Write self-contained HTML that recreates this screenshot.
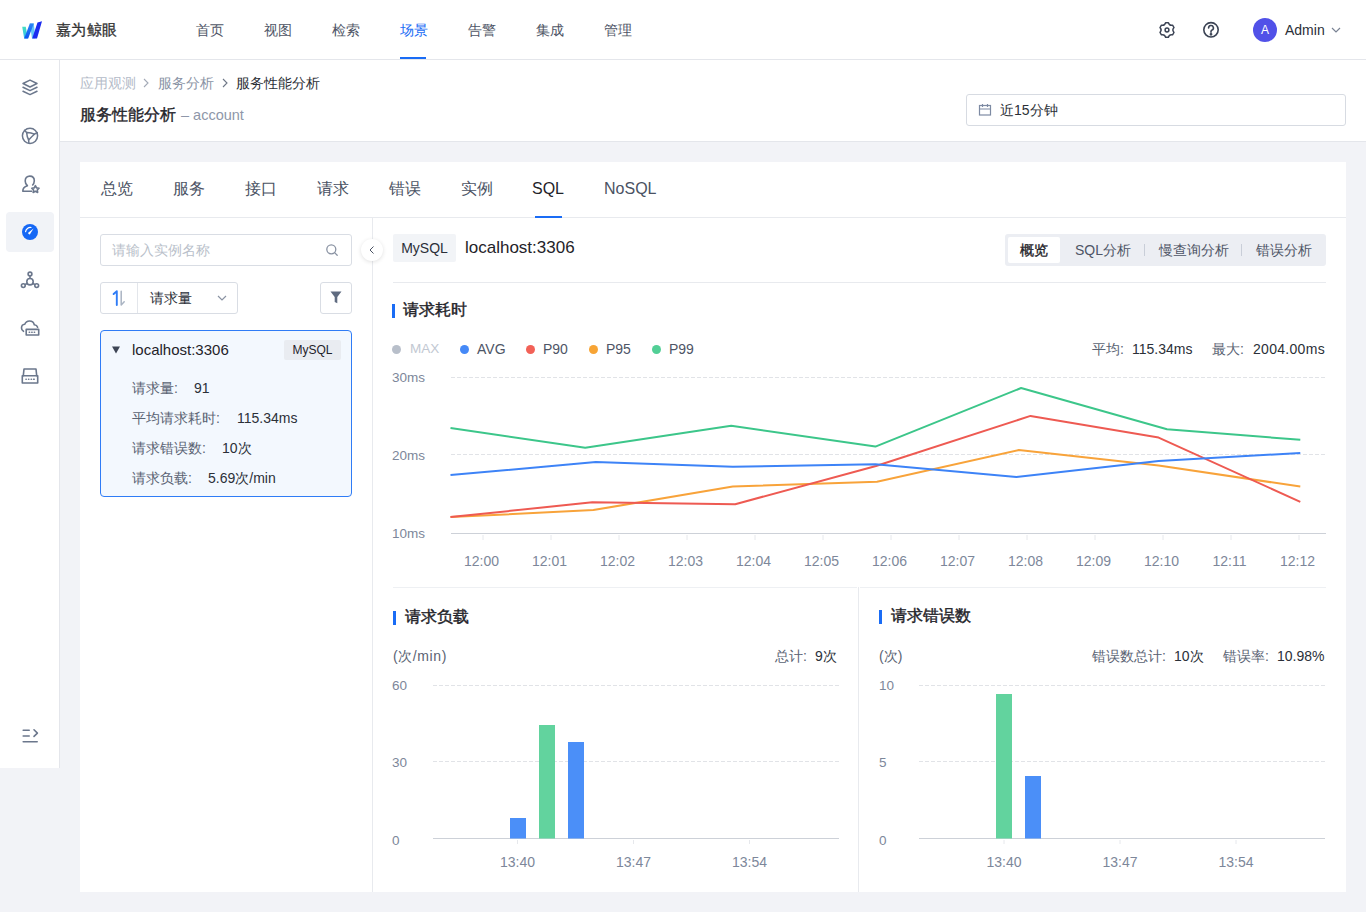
<!DOCTYPE html>
<html><head><meta charset="utf-8">
<style>
*{box-sizing:border-box;margin:0;padding:0}
html,body{width:1366px;height:912px;overflow:hidden;background:#f2f3f7;font-family:"Liberation Sans",sans-serif;color:#1f2329}
.a{position:absolute;white-space:nowrap}
#hdr{position:absolute;left:0;top:0;width:1366px;height:60px;background:#fff;border-bottom:1px solid #e4e6eb}
#side{position:absolute;left:0;top:60px;width:60px;height:708px;background:#fff;border-right:1px solid #e4e6eb}
#ttl{position:absolute;left:60px;top:60px;width:1306px;height:82px;background:#fff;border-bottom:1px solid #e4e6eb}
#card{position:absolute;left:80px;top:162px;width:1266px;height:730px;background:#fff}
.nav{font-size:14px;color:#4e5566;line-height:20px;top:20px}
.tab{font-size:16px;color:#4a5263;line-height:22px;top:178px}
.sicon{position:absolute;left:18px;width:24px;height:24px}
</style></head><body>
<div id="hdr"></div>
<div id="side"></div>
<div id="ttl"></div>
<div id="card"></div>
<!-- HEADER -->
<svg class="a" style="left:18px;top:18px" width="28" height="24" viewBox="0 0 28 24">
<defs><linearGradient id="g1" x1="0" y1="0" x2="0" y2="1"><stop offset="0" stop-color="#45e0c0"/><stop offset="1" stop-color="#2fb8f0"/></linearGradient>
<linearGradient id="g2" x1="0" y1="1" x2="0" y2="0"><stop offset="0" stop-color="#0d52f0"/><stop offset="1" stop-color="#2a86f6"/></linearGradient></defs>
<polygon points="4.2,8.7 7.8,8.7 9.8,20.5 6.2,20.5" fill="url(#g1)"/>
<polygon points="11.8,5.6 15.8,5.6 17.5,20.5 14,20.5" fill="#62c4fa"/>
<polygon points="6.2,20.5 10.2,20.5 15.8,5.6 11.8,5.6" fill="url(#g2)"/>
<polygon points="14.2,20.5 19,20.5 24,3.2 19.5,4.5" fill="#1c2cf0"/>
</svg>
<div class="a" style="left:56px;top:19px;font-size:15px;line-height:22px;color:#333;-webkit-text-stroke:0.3px #333;letter-spacing:0.3px">嘉为鲸眼</div>
<div class="a nav" style="left:196px">首页</div>
<div class="a nav" style="left:264px">视图</div>
<div class="a nav" style="left:332px">检索</div>
<div class="a nav" style="left:400px;color:#1a6cf5">场景</div>
<div class="a" style="left:400px;top:57px;width:26px;height:2px;background:#1a6cf5"></div>
<div class="a nav" style="left:468px">告警</div>
<div class="a nav" style="left:536px">集成</div>
<div class="a nav" style="left:604px">管理</div>
<!-- gear -->
<svg class="a" style="left:1155px;top:18px" width="24" height="24" viewBox="0 0 24 24" fill="none" stroke="#3b4354" stroke-width="1.5" stroke-linejoin="round">
<path transform="translate(12 12) scale(0.95) translate(-12 -12)" d="M10.51 4.34L13.49 4.34Q14.45 7.76 17.89 6.88L19.38 9.46Q16.90 12.00 19.38 14.54L17.89 17.12Q14.45 16.24 13.49 19.66L10.51 19.66Q9.55 16.24 6.11 17.12L4.62 14.54Q7.10 12.00 4.62 9.46L6.11 6.88Q9.55 7.76 10.51 4.34z"/>
<circle cx="12" cy="12" r="1.9"/>
</svg>
<!-- help -->
<svg class="a" style="left:1201px;top:20px" width="20" height="20" viewBox="0 0 20 20" fill="none" stroke="#3b4354" stroke-width="1.6">
<circle cx="10" cy="9.8" r="7.2"/>
<path d="M7.6 7.9a2.4 2.4 0 1 1 3.4 2.2c-.7.3-1 .8-1 1.5v.6" stroke-linecap="round"/>
<circle cx="10" cy="14.3" r=".6" fill="#3b4354"/>
</svg>
<div class="a" style="left:1253px;top:18px;width:24px;height:24px;border-radius:50%;background:#5151e8;color:#fff;font-size:12px;line-height:24px;text-align:center">A</div>
<div class="a" style="left:1285px;top:20px;font-size:14px;line-height:20px;color:#2b2f38">Admin</div>
<svg class="a" style="left:1331px;top:26px" width="10" height="8" viewBox="0 0 10 8" fill="none" stroke="#7a8394" stroke-width="1.2"><path d="M1 2l4 4 4-4"/></svg>
<!-- SIDEBAR -->
<svg class="sicon" style="top:75px" viewBox="0 0 24 24" fill="none" stroke="#6b778c" stroke-width="1.5" stroke-linejoin="round" stroke-linecap="round">
<path d="M12 5.1L19 8.5 12 12 5 8.5z"/><path d="M5 12.3L12 15.6l7-3.3"/><path d="M5 16.3L12 19.6l7-3.3"/>
</svg>
<svg class="sicon" style="top:124px" viewBox="0 0 24 24" fill="none" stroke="#6b778c" stroke-width="1.5" stroke-linejoin="round" stroke-linecap="round">
<circle cx="12" cy="11.8" r="7.6"/><path d="M8.6 8.4Q12.8 8.2 16.4 10.2Q13.6 12.6 10.6 16Q8.9 12.5 8.6 8.4z"/><path d="M8.6 8.4L6.5 6.2M16.4 10.2l2.8-1.6M10.6 16l.3 3.3"/>
</svg>
<svg class="sicon" style="top:172px" viewBox="0 0 24 24" fill="none" stroke="#6b778c" stroke-width="1.6" stroke-linejoin="round">
<path d="M14 19.2H4.8c0-3.3 2.3-4.8 4.6-5.5-1.3-1.1-2.2-2.5-2.2-4.8 0-3 1.8-4.8 4.6-4.8s4.5 1.8 4.5 4.7c0 2.1-.7 3.5-2 4.7"/>
<path d="M17.4 13.6l1.15 2.3 2.5.35-1.8 1.75.42 2.5-2.27-1.2-2.27 1.2.43-2.5-1.8-1.75 2.5-.35z"/>
</svg>
<div class="a" style="left:6px;top:212px;width:48px;height:40px;border-radius:4px;background:#f1f3f7"></div>
<svg class="sicon" style="top:220px" viewBox="0 0 24 24">
<circle cx="12" cy="12" r="8" fill="#1668f5"/>
<path d="M7.6 11.6a4.8 4.8 0 0 1 5.4-4.1" fill="none" stroke="#fff" stroke-width="1.2" stroke-linecap="round"/>
<path d="M15.6 8.6l-3.2 4.8a1.1 1.1 0 1 1-1.6-1.2z" fill="#fff"/>
</svg>
<svg class="sicon" style="top:268px" viewBox="0 0 24 24" fill="none" stroke="#6b778c" stroke-width="1.6">
<circle cx="12" cy="6" r="1.9"/><circle cx="12" cy="13.7" r="3.2"/><circle cx="5.3" cy="17.6" r="1.9"/><circle cx="18.7" cy="17.6" r="1.9"/>
<path d="M12 7.9v2.6M9.3 15.3l-2.4 1.4M14.7 15.3l2.4 1.4"/>
</svg>
<svg class="sicon" style="top:316px" viewBox="0 0 24 24" fill="none" stroke="#6b778c" stroke-width="1.6" stroke-linejoin="round" stroke-linecap="round">
<path d="M5.5 15.3C4.2 14.6 3.5 13.3 3.5 12c0-2 1.5-3.5 3.3-3.7C7.5 6.3 9.3 5 11.5 5c2.4 0 4.3 1.6 4.8 3.8 1.7.2 2.9 1 3.3 2.4"/>
<rect x="8.2" y="13.4" width="12.5" height="5.6"/><path d="M11.3 16.2h.3M13.8 16.2h.3M16.3 16.2h.3"/>
</svg>
<svg class="sicon" style="top:364px" viewBox="0 0 24 24" fill="none" stroke="#6b778c" stroke-width="1.6" stroke-linejoin="round" stroke-linecap="round">
<path d="M5.3 11.7L6 5h12l.7 6.7"/><rect x="4.3" y="11.7" width="15.4" height="7.3"/><path d="M8 15.3h.2M10.6 15.3h.2M13.2 15.3h.2M15.6 15.3h.6"/>
</svg>
<svg class="sicon" style="top:723px" viewBox="0 0 24 24" fill="none" stroke="#6b778c" stroke-width="1.6" stroke-linecap="round" stroke-linejoin="round">
<path d="M5.2 7.2h6M5.2 13h6M5.2 18.8h14"/><path d="M16 6.8l3.4 3.3-3.4 3.3"/>
</svg>
<!-- TITLE AREA -->
<div class="a" style="left:80px;top:73px;font-size:14px;line-height:20px;color:#b4bbc8">应用观测</div>
<svg class="a" style="left:142px;top:78px" width="8" height="10" viewBox="0 0 8 10" fill="none" stroke="#a3aab7" stroke-width="1.1"><path d="M2 1l4 4-4 4"/></svg>
<div class="a" style="left:158px;top:73px;font-size:14px;line-height:20px;color:#8a93a5">服务分析</div>
<svg class="a" style="left:221px;top:78px" width="8" height="10" viewBox="0 0 8 10" fill="none" stroke="#6e7787" stroke-width="1.1"><path d="M2 1l4 4-4 4"/></svg>
<div class="a" style="left:236px;top:73px;font-size:14px;line-height:20px;color:#2b2f36">服务性能分析</div>
<div class="a" style="left:80px;top:104px;font-size:16px;line-height:22px;color:#1f2329;-webkit-text-stroke:0.35px #1f2329">服务性能分析</div>
<div class="a" style="left:181px;top:105px;font-size:14.5px;line-height:20px;color:#8e97a9">– account</div>
<div class="a" style="left:966px;top:94px;width:380px;height:32px;border:1px solid #d7dbe2;border-radius:3px;background:#fff"></div>
<svg class="a" style="left:978px;top:103px" width="14" height="14" viewBox="0 0 14 14" fill="none" stroke="#7d8aa3" stroke-width="1.2"><rect x="1.5" y="2.5" width="11" height="9.5"/><path d="M1.5 6h11M4.5 1v3M9.5 1v3"/></svg>
<div class="a" style="left:1000px;top:100px;font-size:14px;line-height:20px;color:#2b2f36">近15分钟</div>
<!-- CARD TABS -->
<div class="a tab" style="left:101px">总览</div>
<div class="a tab" style="left:173px">服务</div>
<div class="a tab" style="left:245px">接口</div>
<div class="a tab" style="left:317px">请求</div>
<div class="a tab" style="left:389px">错误</div>
<div class="a tab" style="left:461px">实例</div>
<div class="a tab" style="left:532px;color:#1f2329">SQL</div>
<div class="a tab" style="left:604px">NoSQL</div>
<div class="a" style="left:80px;top:217px;width:1266px;height:1px;background:#e8eaee"></div>
<div class="a" style="left:535px;top:216px;width:27px;height:2px;background:#1a6cf5"></div>
<div class="a" style="left:372px;top:218px;width:1px;height:674px;background:#e8eaee"></div>
<!-- LEFT PANEL -->
<div class="a" style="left:100px;top:234px;width:252px;height:32px;border:1px solid #d9dde4;border-radius:3px;background:#fff"></div>
<div class="a" style="left:112px;top:240px;font-size:14px;line-height:20px;color:#b9bfca">请输入实例名称</div>
<svg class="a" style="left:325px;top:243px" width="14" height="14" viewBox="0 0 14 14" fill="none" stroke="#8a93a3" stroke-width="1.3"><circle cx="6.3" cy="6.3" r="4.5"/><path d="M9.6 9.6l2.6 2.6" stroke-linecap="round"/></svg>
<div class="a" style="left:100px;top:282px;width:138px;height:32px;border:1px solid #d9dde4;border-radius:3px;background:#fff"></div>
<div class="a" style="left:137px;top:283px;width:1px;height:30px;background:#e3e6eb"></div>
<svg class="a" style="left:110px;top:289px" width="18" height="18" viewBox="0 0 18 18" fill="none" stroke-width="1.6" stroke-linecap="round" stroke-linejoin="round">
<path d="M3.6 5L6.8 2.2v13.8" stroke="#2f7cf6" stroke-width="1.9"/><path d="M11.2 2.2v13.8l3-3.2" stroke="#aab4c3" stroke-width="1.5"/>
</svg>
<div class="a" style="left:150px;top:288px;font-size:14px;line-height:20px;color:#2b2f38">请求量</div>
<svg class="a" style="left:217px;top:294px" width="10" height="8" viewBox="0 0 10 8" fill="none" stroke="#8a93a3" stroke-width="1.2"><path d="M1 2l4 4 4-4"/></svg>
<div class="a" style="left:320px;top:282px;width:32px;height:32px;border:1px solid #d9dde4;border-radius:3px;background:#fff"></div>
<svg class="a" style="left:330px;top:291px" width="12" height="13" viewBox="0 0 12 13"><path d="M0.5 0.5h11L7.3 6v6.2L4.7 11V6z" fill="#5f6b80"/></svg>
<div class="a" style="left:100px;top:330px;width:252px;height:167px;border:1px solid #2f7cf6;border-radius:4px;background:#f3f8fe"></div>
<svg class="a" style="left:111px;top:346px" width="10" height="8" viewBox="0 0 10 8"><path d="M1 0.5h8L5 7.5z" fill="#3d4555"/></svg>
<div class="a" style="left:132px;top:340px;font-size:15px;line-height:20px;color:#1f2329">localhost:3306</div>
<div class="a" style="left:284px;top:340px;width:57px;height:20px;background:#e9ecf1;border-radius:2px;font-size:12px;line-height:20px;color:#1f2329;text-align:center">MySQL</div>
<div class="a" style="left:132px;top:378px;font-size:14px;line-height:20px;color:#5a6373">请求量:</div>
<div class="a" style="left:194px;top:378px;font-size:14px;line-height:20px;color:#2b3038">91</div>
<div class="a" style="left:132px;top:408px;font-size:14px;line-height:20px;color:#5a6373">平均请求耗时:</div>
<div class="a" style="left:237px;top:408px;font-size:14px;line-height:20px;color:#2b3038">115.34ms</div>
<div class="a" style="left:132px;top:438px;font-size:14px;line-height:20px;color:#5a6373">请求错误数:</div>
<div class="a" style="left:222px;top:438px;font-size:14px;line-height:20px;color:#2b3038">10次</div>
<div class="a" style="left:132px;top:468px;font-size:14px;line-height:20px;color:#5a6373">请求负载:</div>
<div class="a" style="left:208px;top:468px;font-size:14px;line-height:20px;color:#2b3038">5.69次/min</div>
<!-- RIGHT TOP -->
<div class="a" style="left:361px;top:239px;width:22px;height:22px;border-radius:50%;background:#fff;box-shadow:0 1px 4px rgba(0,0,0,0.12)"></div>
<svg class="a" style="left:367px;top:245px" width="10" height="10" viewBox="0 0 10 10" fill="none" stroke="#4a5263" stroke-width="1"><path d="M6.5 1.5L3 5l3.5 3.5"/></svg>
<div class="a" style="left:393px;top:234px;width:63px;height:28px;background:#f2f4f7;border-radius:2px;font-size:14px;line-height:28px;color:#2b2f38;text-align:center">MySQL</div>
<div class="a" style="left:465px;top:237px;font-size:17px;line-height:22px;color:#1f2329">localhost:3306</div>
<div class="a" style="left:1005px;top:234px;width:321px;height:32px;background:#eceef3;border-radius:3px"></div>
<div class="a" style="left:1008px;top:237px;width:52px;height:26px;background:#fff;border-radius:2px;font-size:14px;line-height:26px;text-align:center;color:#1f2329;-webkit-text-stroke:0.35px #1f2329">概览</div>
<div class="a" style="left:1075px;top:240px;font-size:14px;line-height:20px;color:#4e5566">SQL分析</div>
<div class="a" style="left:1144px;top:244px;width:1px;height:12px;background:#c9ced8"></div>
<div class="a" style="left:1159px;top:240px;font-size:14px;line-height:20px;color:#4e5566">慢查询分析</div>
<div class="a" style="left:1241px;top:244px;width:1px;height:12px;background:#c9ced8"></div>
<div class="a" style="left:1256px;top:240px;font-size:14px;line-height:20px;color:#4e5566">错误分析</div>
<div class="a" style="left:393px;top:282px;width:933px;height:1px;background:#e8eaee"></div>
<!-- section title -->
<div class="a" style="left:392px;top:304px;width:3px;height:14px;background:#1a6cf5"></div>
<div class="a" style="left:403px;top:299px;font-size:16px;line-height:22px;color:#1f2329;-webkit-text-stroke:0.4px #1f2329">请求耗时</div>
<!-- legend -->
<div class="a" style="left:392px;top:345px;width:9px;height:9px;border-radius:50%;background:#b8bfca"></div>
<div class="a" style="left:410px;top:339px;font-size:13.5px;line-height:20px;color:#c2c8d2">MAX</div>
<div class="a" style="left:460px;top:345px;width:9px;height:9px;border-radius:50%;background:#4589f7"></div>
<div class="a" style="left:477px;top:339px;font-size:14px;line-height:20px;color:#4e5566">AVG</div>
<div class="a" style="left:526px;top:345px;width:9px;height:9px;border-radius:50%;background:#f26157"></div>
<div class="a" style="left:543px;top:339px;font-size:14px;line-height:20px;color:#4e5566">P90</div>
<div class="a" style="left:589px;top:345px;width:9px;height:9px;border-radius:50%;background:#f7a435"></div>
<div class="a" style="left:606px;top:339px;font-size:14px;line-height:20px;color:#4e5566">P95</div>
<div class="a" style="left:652px;top:345px;width:9px;height:9px;border-radius:50%;background:#52cf96"></div>
<div class="a" style="left:669px;top:339px;font-size:14px;line-height:20px;color:#4e5566">P99</div>
<div class="a" style="left:1092px;top:339px;font-size:14px;line-height:20px;color:#5a6373">平均:</div>
<div class="a" style="left:1132px;top:339px;font-size:14px;line-height:20px;color:#2b3038">115.34ms</div>
<div class="a" style="left:1212px;top:339px;font-size:14px;line-height:20px;color:#5a6373">最大:</div>
<div class="a" style="left:1253px;top:339px;font-size:14px;line-height:20px;color:#2b3038;letter-spacing:0.3px">2004.00ms</div>
<!-- line chart -->
<svg class="a" style="left:0;top:0" width="1366" height="912">
<g font-family="Liberation Sans" font-size="13.5" fill="#7d879a">
<text x="392" y="382">30ms</text><text x="392" y="460">20ms</text><text x="392" y="538">10ms</text>
</g>
<g stroke="#e1e3e7" stroke-width="1" stroke-dasharray="4 2">
<path d="M451 377.5H1326M451 454.5H1326"/>
</g>
<path d="M451 533.5H1326" stroke="#cdd1d8" stroke-width="1"/>
<g stroke="#e6e8ec" stroke-width="1" id="ticks">
<path d="M483 535v5M551 535v5M619 535v5M687 535v5M755 535v5M823 535v5M891 535v5M959 535v5M1027 535v5M1095 535v5M1163 535v5M1231 535v5M1299 535v5"/>
</g>
<g font-family="Liberation Sans" font-size="14" fill="#7d879a" text-anchor="middle">
<text x="481.5" y="566">12:00</text><text x="549.5" y="566">12:01</text><text x="617.5" y="566">12:02</text><text x="685.5" y="566">12:03</text><text x="753.5" y="566">12:04</text><text x="821.5" y="566">12:05</text><text x="889.5" y="566">12:06</text><text x="957.5" y="566">12:07</text><text x="1025.5" y="566">12:08</text><text x="1093.5" y="566">12:09</text><text x="1161.5" y="566">12:10</text><text x="1229.5" y="566">12:11</text><text x="1297.5" y="566">12:12</text>
</g>
<g fill="none" stroke-width="2" stroke-linejoin="round">
<polyline stroke="#3cc68a" points="450.5,427.9 585.2,447.8 731.2,425.8 875.4,446.6 1021.1,388 1167,429.3 1300.3,439.8"/>
<polyline stroke="#f8a33a" points="450.5,517.1 593.4,510.1 732.8,486.4 877,481.7 1018.8,450.1 1158.6,465.5 1300.3,486.6"/>
<polyline stroke="#ee5a52" points="450.5,517.1 592.3,502.3 735.2,504.2 876,466 1030.5,415.9 1158.6,437.6 1300.3,501.8"/>
<polyline stroke="#3d83f7" points="450.5,475 595.8,462.1 732.8,466.7 875.4,464.2 1016.4,477 1158.6,461.1 1300.3,453"/>
</g>
</svg>
<!-- BOTTOM CHARTS -->
<div class="a" style="left:393px;top:587px;width:464px;height:1px;background:#eef0f3"></div>
<div class="a" style="left:860px;top:587px;width:466px;height:1px;background:#eef0f3"></div>
<div class="a" style="left:858px;top:587px;width:1px;height:305px;background:#e8eaee"></div>
<div class="a" style="left:393px;top:611px;width:3px;height:14px;background:#1a6cf5"></div>
<div class="a" style="left:405px;top:606px;font-size:16px;line-height:22px;color:#1f2329;-webkit-text-stroke:0.4px #1f2329">请求负载</div>
<div class="a" style="left:879px;top:610px;width:3px;height:14px;background:#1a6cf5"></div>
<div class="a" style="left:891px;top:605px;font-size:16px;line-height:22px;color:#1f2329;-webkit-text-stroke:0.4px #1f2329">请求错误数</div>
<div class="a" style="left:393px;top:646px;font-size:14px;line-height:20px;color:#5a6373;letter-spacing:0.6px">(次/min)</div>
<div class="a" style="left:775px;top:646px;font-size:14px;line-height:20px;color:#5a6373">总计:</div>
<div class="a" style="left:815px;top:646px;font-size:14px;line-height:20px;color:#2b3038">9次</div>
<div class="a" style="left:879px;top:646px;font-size:14px;line-height:20px;color:#5a6373">(次)</div>
<div class="a" style="left:1092px;top:646px;font-size:14px;line-height:20px;color:#5a6373">错误数总计:</div>
<div class="a" style="left:1174px;top:646px;font-size:14px;line-height:20px;color:#2b3038">10次</div>
<div class="a" style="left:1223px;top:646px;font-size:14px;line-height:20px;color:#5a6373">错误率:</div>
<div class="a" style="left:1277px;top:646px;font-size:14px;line-height:20px;color:#2b3038">10.98%</div>
<svg class="a" style="left:0;top:0" width="1366" height="912">
<g font-family="Liberation Sans" font-size="13.5" fill="#7d879a">
<text x="392" y="690">60</text><text x="392" y="767">30</text><text x="392" y="845">0</text>
<text x="879" y="690">10</text><text x="879" y="767">5</text><text x="879" y="845">0</text>
</g>
<g stroke="#e1e3e7" stroke-width="1" stroke-dasharray="4 2">
<path d="M433 685.5H839M433 761.5H839"/>
<path d="M919 685.5H1325M919 761.5H1325"/>
</g>
<path d="M433 838.5H839M919 838.5H1325" stroke="#cdd1d8" stroke-width="1"/>
<path d="M517.5 840v4M633.5 840v4M749.5 840v4M1004 840v4M1120 840v4M1236 840v4" stroke="#e6e8ec" stroke-width="1"/>
<g font-family="Liberation Sans" font-size="14" fill="#7d879a" text-anchor="middle">
<text x="517.5" y="867">13:40</text><text x="633.5" y="867">13:47</text><text x="749.5" y="867">13:54</text>
<text x="1004" y="867">13:40</text><text x="1120" y="867">13:47</text><text x="1236" y="867">13:54</text>
</g>
<rect x="510" y="818" width="16" height="20.5" fill="#4b8ff8"/>
<rect x="539" y="725" width="16" height="113.5" fill="#62d39e"/>
<rect x="568" y="742" width="16" height="96.5" fill="#4b8ff8"/>
<rect x="996" y="694" width="16" height="144.5" fill="#62d39e"/>
<rect x="1025" y="776" width="16" height="62.5" fill="#4b8ff8"/>
</svg>

</body></html>
